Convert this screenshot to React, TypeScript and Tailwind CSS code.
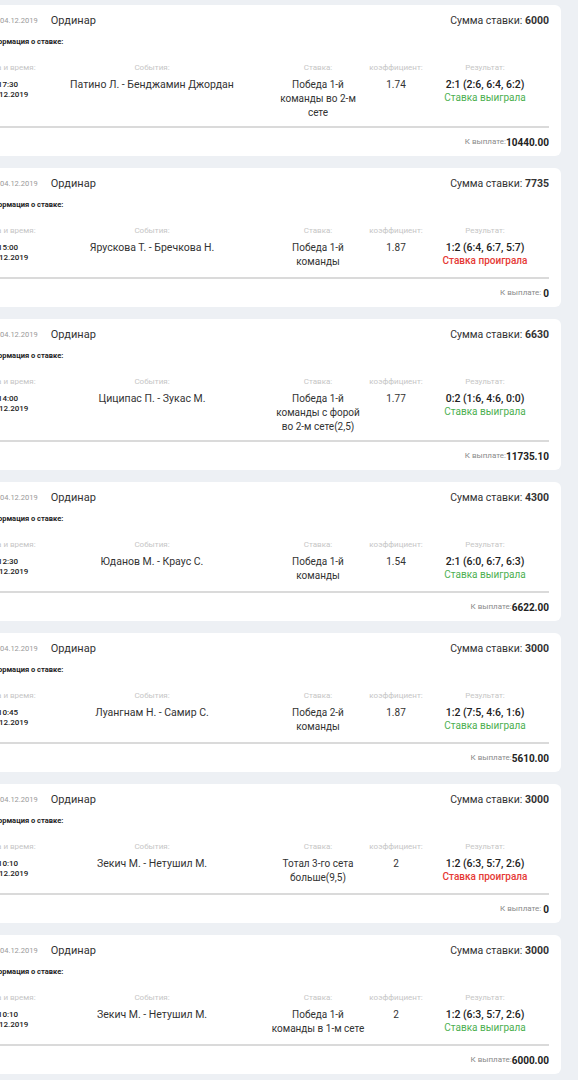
import React from 'react';

interface Bet {
  time: string;
  sum: string;
  event: string;
  bet: string;
  coef: string;
  score: string;
  won: boolean;
  payout: string;
}

const bets: Bet[] = [
  { time: '17:30', sum: '6000', event: 'Патино Л. - Бенджамин Джордан', bet: 'Победа 1-й команды во 2-м сете', coef: '1.74', score: '2:1 (2:6, 6:4, 6:2)', won: true, payout: '10440.00' },
  { time: '15:00', sum: '7735', event: 'Ярускова Т. - Бречкова Н.', bet: 'Победа 1-й команды', coef: '1.87', score: '1:2 (6:4, 6:7, 5:7)', won: false, payout: '0' },
  { time: '14:00', sum: '6630', event: 'Циципас П. - Зукас М.', bet: 'Победа 1-й команды с форой во 2-м сете(2,5)', coef: '1.77', score: '0:2 (1:6, 4:6, 0:0)', won: true, payout: '11735.10' },
  { time: '12:30', sum: '4300', event: 'Юданов М. - Краус С.', bet: 'Победа 1-й команды', coef: '1.54', score: '2:1 (6:0, 6:7, 6:3)', won: true, payout: '6622.00' },
  { time: '10:45', sum: '3000', event: 'Луангнам Н. - Самир С.', bet: 'Победа 2-й команды', coef: '1.87', score: '1:2 (7:5, 4:6, 1:6)', won: true, payout: '5610.00' },
  { time: '10:10', sum: '3000', event: 'Зекич М. - Нетушил М.', bet: 'Тотал 3-го сета больше(9,5)', coef: '2', score: '1:2 (6:3, 5:7, 2:6)', won: false, payout: '0' },
  { time: '10:10', sum: '3000', event: 'Зекич М. - Нетушил М.', bet: 'Победа 1-й команды в 1-м сете', coef: '2', score: '1:2 (6:3, 5:7, 2:6)', won: true, payout: '6000.00' },
];

const cols = 'grid grid-cols-[50px_235px_100px_56px_122px] text-center';

const BetCard: React.FC<{ item: Bet }> = ({ item }) => {
  const zero = item.payout === '0';
  return (
    <div className="bg-white rounded-[6px] pl-[13px] pr-[12px] pt-[8px] pb-[8px]">
      {/* top row */}
      <div className="flex items-center justify-between h-[16px]">
        <div className="flex items-center pl-[17px]">
          <span className="text-[7.5px] text-[#9a9a9a]">04.12.2019</span>
          <span className="ml-[13px] text-[11px] text-[#333]">Ординар</span>
        </div>
        <div className="text-[10.5px] text-[#333]">
          Сумма ставки: <span className="font-bold">{item.sum}</span>
        </div>
      </div>

      <div className="mt-[8px] text-[7.5px] leading-[10px] font-bold text-[#222]">Информация о ставке:</div>

      {/* table */}
      <div className="mt-[16px] border-b-2 border-[#dadada] pb-[6px]">
        <div className={`${cols} text-[8px] leading-[10px] text-[#c6c6c6]`}>
          <div className="whitespace-nowrap">Дата и время:</div>
          <div className="pl-[3px]">События:</div>
          <div>Ставка:</div>
          <div>коэффициент:</div>
          <div>Результат:</div>
        </div>
        <div className={`${cols} mt-[5px] min-h-[30px] items-start text-[#333]`}>
          <div className="text-[8px] leading-[10px] font-medium text-[#222] pt-[2px]">
            <div>{item.time}</div>
            <div>04.12.2019</div>
          </div>
          <div className="pl-[3px] text-[10.5px] leading-[14px]">{item.event}</div>
          <div className="px-[3px] text-[10px] leading-[14px]">{item.bet}</div>
          <div className="text-[10px] leading-[14px]">{item.coef}</div>
          <div className="text-[10.5px] leading-[13px]">
            <div className="font-medium text-[#222]">{item.score}</div>
            <div className={item.won ? 'text-[10px] text-[#4caf50]' : 'text-[10px] text-[#e53935] font-medium'}>
              {item.won ? 'Ставка выиграла' : 'Ставка проиграла'}
            </div>
          </div>
        </div>
      </div>

      <div className="mt-[8px] h-[12px] flex items-center justify-end">
        <span className="text-[8px] text-[#8a8a8a]">К выплате:{zero ? '\u00a0' : ''}</span>
        <span className="text-[10px] font-bold text-[#222]">{item.payout}</span>
      </div>
    </div>
  );
};

const App: React.FC = () => {
  return (
    <div
      className="min-h-screen bg-[#edf0f4] overflow-hidden"
      style={{ fontFamily: 'Roboto, "Noto Sans", sans-serif' }}
    >
      <div className="ml-[-30px] w-[591px] pt-[5px] flex flex-col gap-[12px]">
        {bets.map((b, i) => (
          <BetCard key={i} item={b} />
        ))}
      </div>
    </div>
  );
};

export default App;
